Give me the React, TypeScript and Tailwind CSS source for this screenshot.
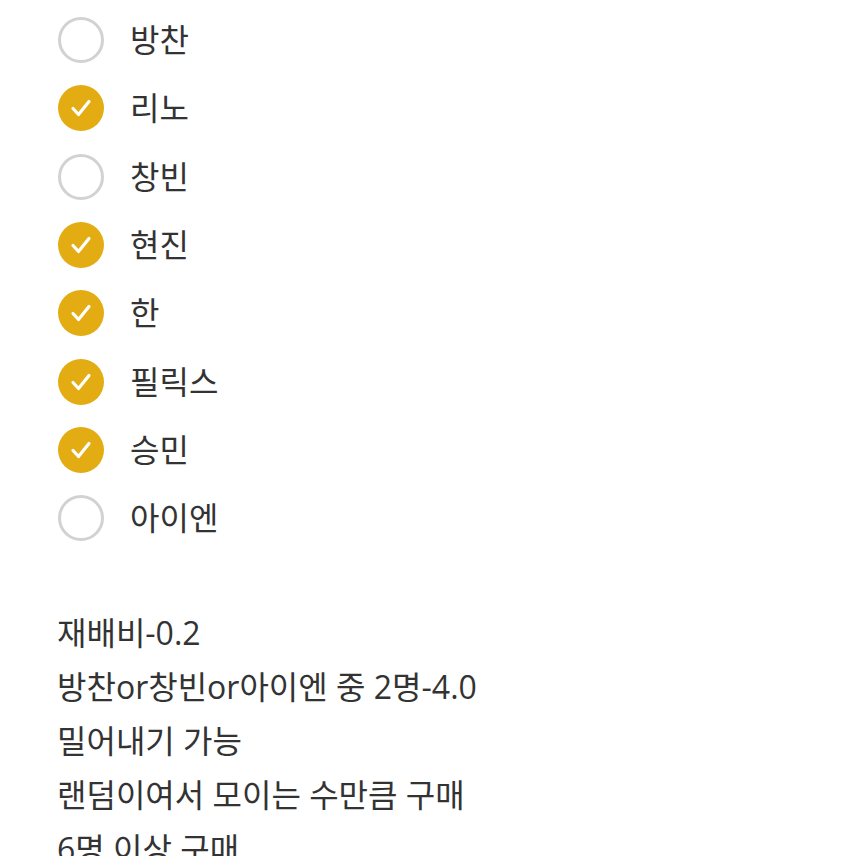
import React from "react";

const items: [string, boolean][] = [
  ["방찬", false],
  ["리노", true],
  ["창빈", false],
  ["현진", true],
  ["한", true],
  ["필릭스", true],
  ["승민", true],
  ["아이엔", false],
];

const lines = [
  "재배비-0.2",
  "방찬or창빈or아이엔 중 2명-4.0",
  "밀어내기 가능",
  "랜덤이여서 모이는 수만큼 구매",
  "6명 이상 구매",
];

export default function App() {
  return (
    <div
      className="w-[856px] h-[856px] overflow-hidden bg-white text-[#333333]"
      style={{ fontFamily: '"Open Sans", "Noto Sans CJK KR", "Noto Sans", sans-serif' }}
    >
      <div className="pt-[6px] pl-[58px] flex flex-col">
        {items.map(([name, checked]) => (
          <div key={name} className="h-[68.3px] flex items-center gap-[26px]">
            {checked ? (
              <div className="w-[46px] h-[46px] rounded-full bg-[#e2ac12] flex items-center justify-center">
                <svg width="26" height="26" viewBox="0 0 26 26" fill="none">
                  <path d="M5 13.5 L10.5 19.5 L21 6.5" stroke="white" strokeWidth="3.2" strokeLinecap="round" strokeLinejoin="round" />
                </svg>
              </div>
            ) : (
              <div className="w-[46px] h-[46px] rounded-full border-[3px] border-[#d2d2d2] bg-white" />
            )}
            <span className="text-[32px] leading-none">{name}</span>
          </div>
        ))}
      </div>
      <div className="mt-[54px] pl-[57px] flex flex-col">
        {lines.map((l) => (
          <div key={l} className="text-[32px] leading-[54px] whitespace-nowrap">{l}</div>
        ))}
      </div>
    </div>
  );
}
